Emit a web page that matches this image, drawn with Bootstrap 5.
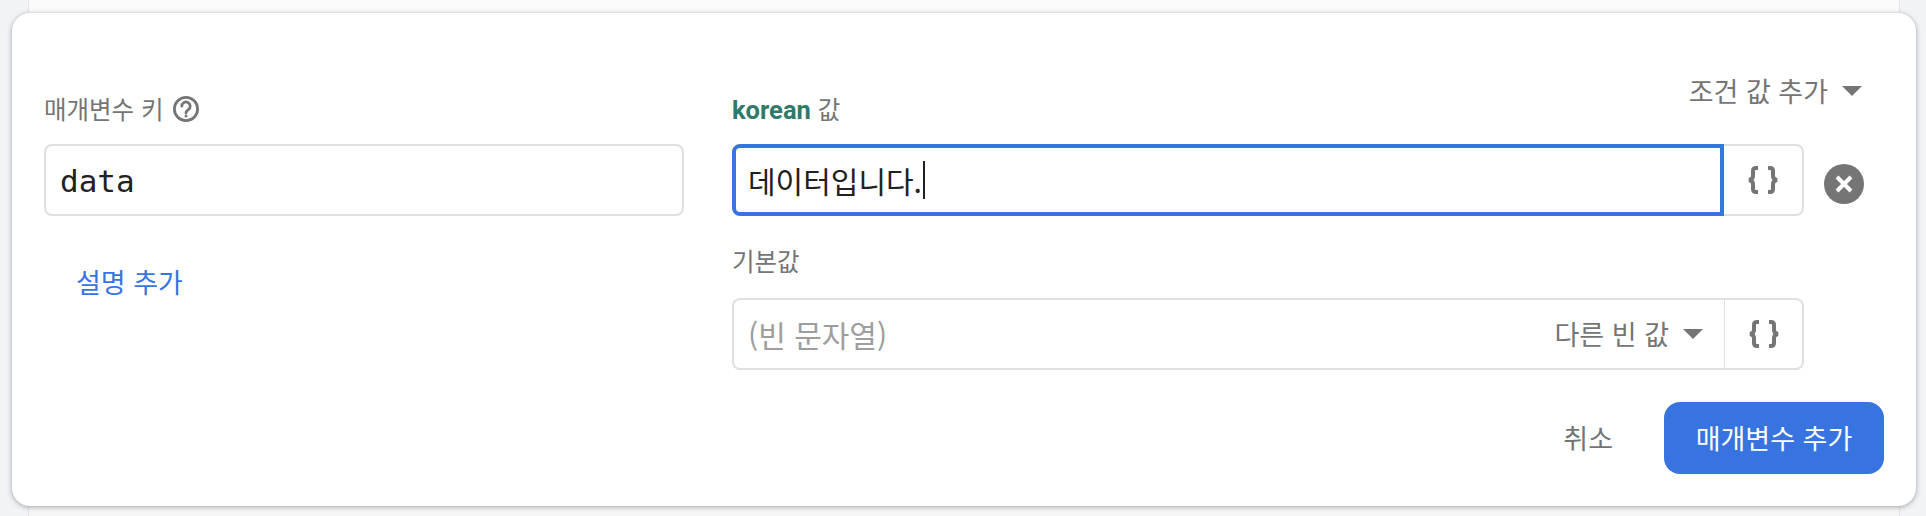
<!doctype html>
<html lang="ko">
<head>
<meta charset="utf-8">
<link rel="stylesheet" href="https://cdn.jsdelivr.net/npm/bootstrap@5.3.0/dist/css/bootstrap.min.css">
<style>
html,body{height:516px;overflow:hidden}
body{background:#f1f3f6;font-family:"Noto Sans CJK KR","Roboto",sans-serif;color:#757575}
.backing{margin:0 26px 0 28px;height:516px;padding-top:13px;background:linear-gradient(#fafafa 0 14px,#f5f5f5 14px);border-inline:1px solid #e4e4e4}
.sheet{margin:0 -17px;height:493px;background:#fff;border:0;border-radius:18px;box-shadow:0 1px 5px rgba(60,64,67,.45);padding:0 32px}
.key-col{width:640px;margin-right:48px;flex:none}
.value-col{flex:1 1 0;min-width:0}
.field-label{height:32px;margin:80px 0 19px;font-size:24.5px;line-height:32px;color:#757575}
.param-name{font-family:Roboto,sans-serif;font-weight:700;color:#2f7a6a;font-size:25.5px}
.sheet .form-control{height:72px;border:2px solid #e0e0e0;border-radius:8px;padding:0 14px;font-size:30px;line-height:66px;color:#212121;box-shadow:none}
.sheet .form-control.mono-text{font-family:"DejaVu Sans Mono",monospace;font-size:31px;padding-top:2px}
.add-desc{display:inline-block;margin:48px 0 0 32px;padding:0;font-size:27px;line-height:36px;color:#3874e0;text-decoration:none}
.add-cond{margin:60px 22px 0 0;font-size:27px;line-height:36px;color:#757575;gap:14px}
.tri{display:inline-block;width:0;height:0;border-inline:10px solid transparent;border-top:10px solid #757575}
.inputs-wrap{width:1072px;flex:none}
.sheet .form-control.live{border:4px solid #3874e0;border-radius:8px 0 0 8px;line-height:64px;padding:0 12px;position:relative;z-index:3;display:flex;align-items:center}
.cursor{display:inline-block;width:2px;height:38px;background:#212121;margin-left:1px}
.sheet .form-control.muted{border-right:0;border-radius:8px 0 0 8px;color:#9e9e9e;font-size:30px;padding-right:21px;display:flex;align-items:center}
.brace-btn{width:81px;height:72px;padding:0;border:2px solid #e0e0e0;border-left:0;border-radius:0 8px 8px 0;background:#fff;display:flex;align-items:center;justify-content:center}
.brace-btn.split{border-left:2px solid #e0e0e0}
.other{font-size:27px;color:#757575;white-space:nowrap;gap:14px}
.close-dot{width:40px;height:40px;margin:20px 0 0 20px;padding:0;border:0;border-radius:50%;background:#757575;display:flex;align-items:center;justify-content:center}
.default-label{height:32px;margin:29px 0 21px;font-size:24.5px;line-height:32px}
.footer-row{margin-top:32px}
.cancel{font-size:27px;color:#757575;padding:0;border:0;background:none;margin-right:51px}
.cancel:hover{color:#757575}
.submit{width:220px;height:72px;padding:0;border:0;border-radius:16px;background:#3874e0;color:#fff;font-size:27px}
</style>
</head>
<body>
<div class="backing">
  <div class="card sheet d-flex flex-row">
    <div class="key-col">
      <div class="field-label d-flex align-items-center gap-2">매개변수 키
        <svg width="28" height="28" viewBox="0 0 28 28" fill="none" stroke="#757575" stroke-width="2.800"><circle cx="14" cy="14" r="11.600"/><path d="M9.800 11.200a4.200 4.200 0 1 1 6.600 3.400c-1.500 1-2.400 1.800-2.400 3.400" stroke-linecap="round"/><circle cx="14" cy="21" r="1.500" fill="#757575" stroke="none"/></svg>
      </div>
      <div class="form-control mono-text">data</div>
      <a href="#" class="add-desc">설명 추가</a>
    </div>
    <div class="value-col">
      <div class="d-flex justify-content-between">
        <div class="field-label"><span class="param-name">korean</span> 값</div>
        <div class="add-cond d-flex align-items-center align-self-start">조건 값 추가 <span class="tri"></span></div>
      </div>
      <div class="d-flex">
        <div class="inputs-wrap input-group flex-nowrap">
          <div class="form-control live">데이터입니다.<span class="cursor"></span></div>
          <button class="brace-btn" type="button" aria-label="변수"><svg width="32" height="28" viewBox="0 0 32 28" fill="none" stroke="#757575" stroke-width="4"><path d="M11 2H9C7 2 6 3 6 5v5c0 2-1 3.500-4 4 3 .5 4 2 4 4v5c0 2 1 3 3 3h2M21 2h2c2 0 3 1 3 3v5c0 2 1 3.500 4 4-3 .5-4 2-4 4v5c0 2-1 3-3 3h-2"/></svg></button>
        </div>
        <button class="close-dot" type="button" aria-label="삭제"><svg width="20" height="20" viewBox="0 0 20 20" stroke="#fff" stroke-width="4"><path d="M3 3l14 14M17 3L3 17"/></svg></button>
      </div>
      <div class="default-label">기본값</div>
      <div class="inputs-wrap input-group flex-nowrap">
        <div class="form-control muted justify-content-between"><span>(빈 문자열)</span><span class="other d-flex align-items-center">다른 빈 값 <span class="tri"></span></span></div>
        <button class="brace-btn split" type="button" aria-label="변수"><svg width="32" height="28" viewBox="0 0 32 28" fill="none" stroke="#757575" stroke-width="4"><path d="M11 2H9C7 2 6 3 6 5v5c0 2-1 3.500-4 4 3 .5 4 2 4 4v5c0 2 1 3 3 3h2M21 2h2c2 0 3 1 3 3v5c0 2 1 3.500 4 4-3 .5-4 2-4 4v5c0 2-1 3-3 3h-2"/></svg></button>
      </div>
      <div class="d-flex justify-content-end align-items-center footer-row">
        <button class="btn cancel" type="button">취소</button>
        <button class="btn submit" type="button">매개변수 추가</button>
      </div>
    </div>
  </div>
</div>
</body>
</html>
